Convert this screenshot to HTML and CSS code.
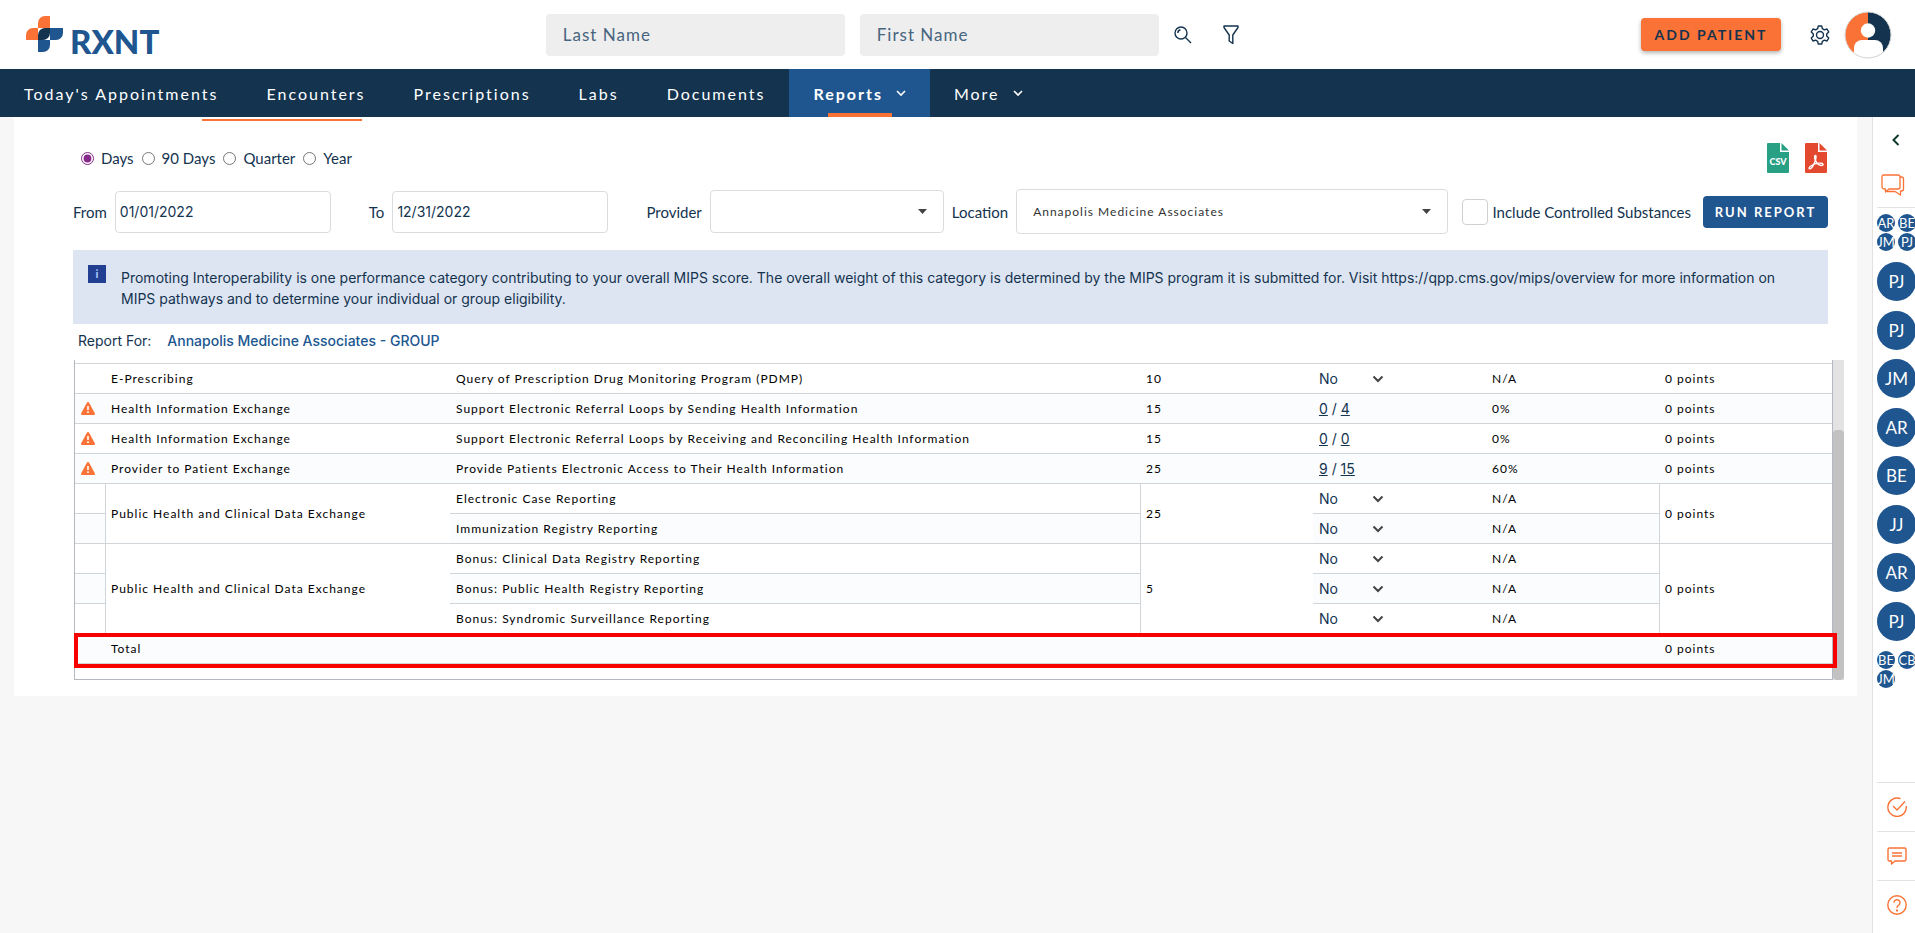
FILE: index.html
```html
<!DOCTYPE html>
<html lang="en">
<head>
    <meta charset="UTF-8">
    <meta name="viewport" content="width=device-width, initial-scale=1.0">
    <title>RXNT - Reports</title>
    <link rel="stylesheet" href="styles.css">
</head>
<body>

    <header class="header">
        <a class="logo" href="#" aria-label="RXNT">
            <svg width="37" height="37" viewBox="0 0 37 37">
                <path fill="#fa7236" d="M0 24v-5a7 7 0 0 1 7-7h5V7a7 7 0 0 1 7-7h5v12H12v12z"/>
                <path fill="#20568f" d="M24 12h13v5a7 7 0 0 1-7 7h-6v5a7 7 0 0 1-7 7h-5V24h12z"/>
                <path fill="#13334f" d="M12 24v-5a7 7 0 0 1 7-7h5v5a7 7 0 0 1-7 7z"/>
            </svg>
            <span>RXNT</span>
        </a>
        <form class="search">
            <input type="text" placeholder="Last Name" aria-label="Last Name">
            <input type="text" placeholder="First Name" aria-label="First Name">
            <button type="button" class="icon-btn" aria-label="Search">
                <svg width="18" height="18" viewBox="0 0 18 18" fill="none" stroke="#13334f" stroke-width="1.4">
                    <circle cx="7" cy="7" r="6"/><path d="M11.5 11.5L17 17M3.8 7a3.4 3.4 0 0 1 2.6-3.2"/>
                </svg>
            </button>
            <button type="button" class="icon-btn" aria-label="Filter">
                <svg width="16" height="20" viewBox="0 0 16 20" fill="none" stroke="#13334f" stroke-width="1.4" stroke-linejoin="round">
                    <path d="M1 1h14v1.5L9.8 10v8.5L6.2 16v-6L1 2.5z"/>
                </svg>
            </button>
        </form>
        <div class="account">
            <button type="button" class="add-patient">ADD PATIENT</button>
            <button type="button" class="icon-btn" aria-label="Settings">
                <svg width="20" height="20" viewBox="0 0 20 20" fill="none" stroke="#13334f" stroke-width="1.4" stroke-linejoin="round">
                    <path d="M8.300 1h3.400l.7 2.700 1.900 1.100 2.700-.8 1.700 2.900-2 2v2.200l2 2-1.700 2.900-2.700-.8-1.900 1.100-.7 2.700H8.300l-.7-2.700-1.900-1.100-2.700.8-1.700-2.900 2-2V8.900l-2-2L3 4l2.700.8 1.900-1.100z"/>
                    <circle cx="10" cy="10" r="3.5"/>
                </svg>
            </button>
            <svg class="avatar" width="48" height="48" viewBox="0 0 48 48">
                <defs><clipPath id="face"><circle cx="24" cy="24" r="23"/></clipPath></defs>
                <g clip-path="url(#face)">
                    <path fill="#fa7236" d="M0 0h24v48H0z"/>
                    <path fill="#13334f" d="M24 0h24v48H24z"/>
                    <circle cx="24" cy="19.5" r="7.2" fill="#fff"/>
                    <path fill="#fff" d="M10 48V37a8 8 0 0 1 8-8h13a8 8 0 0 1 8 8v11z"/>
                </g>
                <circle cx="24" cy="24" r="23" fill="none" stroke="#d8d8d8"/>
            </svg>
        </div>
    </header>

    <nav class="nav">
        <a href="#">Today's Appointments</a>
        <a href="#">Encounters</a>
        <a href="#">Prescriptions</a>
        <a href="#">Labs</a>
        <a href="#">Documents</a>
        <a href="#" class="active">Reports
            <svg width="10" height="7" viewBox="0 0 10 7" fill="none" stroke="#fff" stroke-width="1.6"><path d="M1 1l4 4 4-4"/></svg>
        </a>
        <a href="#">More
            <svg width="10" height="7" viewBox="0 0 10 7" fill="none" stroke="#fff" stroke-width="1.6"><path d="M1 1l4 4 4-4"/></svg>
        </a>
    </nav>

    <div class="layout">
        <main class="card">
            <div class="tab-line"></div>

            <div class="periods">
                <label><input type="radio" name="period" checked> Days</label>
                <label><input type="radio" name="period"> 90 Days</label>
                <label><input type="radio" name="period"> Quarter</label>
                <label><input type="radio" name="period"> Year</label>
                <div class="exports">
                    <button type="button" class="icon-btn" aria-label="Export CSV">
                        <svg width="24" height="32" viewBox="0 0 24 32">
                            <path fill="#28a084" d="M2 1h12v9h9v20a1 1 0 0 1-1 1H2a1 1 0 0 1-1-1V2a1 1 0 0 1 1-1z"/>
                            <path fill="#28a084" d="M15.5 1L23 8.5h-7.5z"/>
                            <text x="12" y="23" class="file-type">CSV</text>
                        </svg>
                    </button>
                    <button type="button" class="icon-btn" aria-label="Export PDF">
                        <svg width="24" height="32" viewBox="0 0 24 32">
                            <path fill="#e2492f" d="M2 1h12v9h9v20a1 1 0 0 1-1 1H2a1 1 0 0 1-1-1V2a1 1 0 0 1 1-1z"/>
                            <path fill="#e2492f" d="M15.5 1L23 8.5h-7.5z"/>
                            <path fill="none" stroke="#fff" stroke-width="1.4" d="M11.5 13.5c-1.500 0-1 3 .3 5.500 1.500 3 3.500 4.500 5.500 4.500 2.500 0 2.200-1.800.2-2.200-3-.5-7.500.7-10 2.200-2.500 1.600-3 3.300-1.800 3.300 1.500 0 4-3.800 5.300-7.300 1-2.800 1.500-6 .5-6z"/>
                        </svg>
                    </button>
                </div>
            </div>

            <form class="filters">
                <label for="from">From</label>
                <input type="text" id="from" class="date" value="01/01/2022">
                <label for="to" class="spaced">To</label>
                <input type="text" id="to" class="date" value="12/31/2022">
                <label for="provider" class="spaced">Provider</label>
                <select id="provider" class="provider"><option></option></select>
                <label for="location">Location</label>
                <select id="location" class="location"><option>Annapolis Medicine Associates</option></select>
                <label class="controlled"><input type="checkbox"> Include Controlled Substances</label>
                <button type="button" class="run">RUN REPORT</button>
            </form>

            <div class="info">
                <span class="info-icon">i</span>
                <p>Promoting Interoperability is one performance category contributing to your overall MIPS score. The overall weight of this category is determined by the MIPS program it is submitted for. Visit https://qpp.cms.gov/mips/overview for more information on MIPS pathways and to determine your individual or group eligibility.</p>
            </div>

            <div class="report-for">Report For: <strong>Annapolis Medicine Associates - GROUP</strong></div>

            <div class="results">
                <div class="table-box">
                    <table>
                        <colgroup>
                            <col class="c-icon"><col class="c-objective"><col><col class="c-num"><col class="c-num"><col class="c-num"><col class="c-num">
                        </colgroup>
                        <tbody>
                            <tr>
                                <td></td><td>E-Prescribing</td><td>Query of Prescription Drug Monitoring Program (PDMP)</td><td>10</td>
                                <td><select aria-label="PDMP"><option>No</option></select></td><td>N/A</td><td>0 points</td>
                            </tr>
                            <tr>
                                <td class="warn"><svg width="14" height="13" viewBox="0 0 14 13"><path fill="#fa7236" d="M7 0c.5 0 .8.300 1 .6l5.800 10.600c.4.900 0 1.800-1 1.800H1.200c-1 0-1.400-.9-1-1.800L6 .600C6.200.300 6.500 0 7 0z"/><path stroke="#fff" stroke-width="1.6" d="M7 4v4M7 9.300v1.600"/></svg></td>
                                <td>Health Information Exchange</td><td>Support Electronic Referral Loops by Sending Health Information</td><td>15</td>
                                <td class="ratio"><a href="#">0</a> / <a href="#">4</a></td><td>0%</td><td>0 points</td>
                            </tr>
                            <tr>
                                <td class="warn"><svg width="14" height="13" viewBox="0 0 14 13"><path fill="#fa7236" d="M7 0c.5 0 .8.300 1 .6l5.800 10.600c.4.900 0 1.800-1 1.800H1.200c-1 0-1.400-.9-1-1.800L6 .600C6.200.300 6.500 0 7 0z"/><path stroke="#fff" stroke-width="1.6" d="M7 4v4M7 9.300v1.600"/></svg></td>
                                <td>Health Information Exchange</td><td>Support Electronic Referral Loops by Receiving and Reconciling Health Information</td><td>15</td>
                                <td class="ratio"><a href="#">0</a> / <a href="#">0</a></td><td>0%</td><td>0 points</td>
                            </tr>
                            <tr>
                                <td class="warn"><svg width="14" height="13" viewBox="0 0 14 13"><path fill="#fa7236" d="M7 0c.5 0 .8.300 1 .6l5.800 10.600c.4.900 0 1.800-1 1.800H1.200c-1 0-1.400-.9-1-1.800L6 .600C6.200.300 6.500 0 7 0z"/><path stroke="#fff" stroke-width="1.6" d="M7 4v4M7 9.300v1.600"/></svg></td>
                                <td>Provider to Patient Exchange</td><td>Provide Patients Electronic Access to Their Health Information</td><td>25</td>
                                <td class="ratio"><a href="#">9</a> / <a href="#">15</a></td><td>60%</td><td>0 points</td>
                            </tr>
                            <tr>
                                <td></td><td rowspan="2">Public Health and Clinical Data Exchange</td><td>Electronic Case Reporting</td><td rowspan="2">25</td>
                                <td><select aria-label="Electronic Case Reporting"><option>No</option></select></td><td>N/A</td><td rowspan="2">0 points</td>
                            </tr>
                            <tr>
                                <td></td><td>Immunization Registry Reporting</td>
                                <td><select aria-label="Immunization Registry Reporting"><option>No</option></select></td><td>N/A</td>
                            </tr>
                            <tr>
                                <td></td><td rowspan="3">Public Health and Clinical Data Exchange</td><td>Bonus: Clinical Data Registry Reporting</td><td rowspan="3">5</td>
                                <td><select aria-label="Clinical Data Registry Reporting"><option>No</option></select></td><td>N/A</td><td rowspan="3">0 points</td>
                            </tr>
                            <tr>
                                <td></td><td>Bonus: Public Health Registry Reporting</td>
                                <td><select aria-label="Public Health Registry Reporting"><option>No</option></select></td><td>N/A</td>
                            </tr>
                            <tr>
                                <td></td><td>Bonus: Syndromic Surveillance Reporting</td>
                                <td><select aria-label="Syndromic Surveillance Reporting"><option>No</option></select></td><td>N/A</td>
                            </tr>
                            <tr>
                                <td></td><td>Total</td><td></td><td></td><td></td><td></td><td>0 points</td>
                            </tr>
                        </tbody>
                    </table>
                    <div class="highlight"></div>
                </div>
                <div class="track"><div class="thumb"></div></div>
            </div>
        </main>

        <aside class="sidebar">
            <button type="button" class="icon-btn collapse" aria-label="Expand">
                <svg width="8" height="12" viewBox="0 0 8 12" fill="none" stroke="#103c2c" stroke-width="2"><path d="M6.5 1L1.5 6l5 5"/></svg>
            </button>
            <button type="button" class="icon-btn chat" aria-label="Messages">
                <svg width="24" height="22" viewBox="0 0 24 22" fill="none" stroke="#fa7236" stroke-width="1.3" stroke-linejoin="round">
                    <path d="M3 1h14a2 2 0 0 1 2 2v10a2 2 0 0 1-2 2H8l-3.500 3V15H3a2 2 0 0 1-2-2V3a2 2 0 0 1 2-2z"/>
                    <path d="M19 3h1.500A2 2 0 0 1 22.500 5v10a2 2 0 0 1-2 2h-1v4L14 17.500H6"/>
                </svg>
            </button>
            <div class="minis">
                <span>AR</span><span>BE</span><span>JM</span><span>PJ</span>
            </div>
            <div class="people">
                <span>PJ</span><span>PJ</span><span>JM</span><span>AR</span><span>BE</span><span>JJ</span><span>AR</span><span>PJ</span>
            </div>
            <div class="minis">
                <span>BE</span><span>CB</span><span>JM</span>
            </div>
            <div class="tools">
                <button type="button" class="icon-btn" aria-label="Tasks">
                    <svg width="20" height="20" viewBox="0 0 20 20" fill="none" stroke="#fa7236" stroke-width="1.4"><path d="M13.5 1.7A9.200 9.200 0 1 0 19.200 9M6 9l4 4 8-8.500"/></svg>
                </button>
                <button type="button" class="icon-btn" aria-label="Comments">
                    <svg width="20" height="18" viewBox="0 0 20 18" fill="none" stroke="#fa7236" stroke-width="1.4" stroke-linejoin="round"><path d="M2.500 1h15A1.500 1.500 0 0 1 19 2.500v10a1.500 1.500 0 0 1-1.500 1.500H8l-3.500 3V14h-2A1.500 1.500 0 0 1 1 12.500v-10A1.500 1.500 0 0 1 2.500 1zM5 6h10M5 9h10"/></svg>
                </button>
                <button type="button" class="icon-btn" aria-label="Help">
                    <svg width="20" height="20" viewBox="0 0 20 20" fill="none" stroke="#fa7236" stroke-width="1.4"><circle cx="10" cy="10" r="9.2"/><path d="M7 7.800a3 3 0 1 1 4.500 2.600c-1 .6-1.500 1-1.500 2.600"/><path stroke-width="2" d="M10 14.500v2"/></svg>
                </button>
            </div>
        </aside>
    </div>

</body>
</html>
```
FILE: styles.css
```css
* {
    box-sizing: border-box;
}

body {
    margin: 0;
    height: 100vh;
    display: flex;
    flex-direction: column;
    overflow: hidden;
    background-color: #f7f7f7;
    color: #13334f;
    font-family: Lato, sans-serif;
    font-size: 15px;
}

input, select, button {
    font-family: inherit;
    color: inherit;
    margin: 0;
}

.icon-btn {
    display: flex;
    align-items: center;
    justify-content: center;
    padding: 0;
    border: none;
    background: none;
    cursor: pointer;
}

/* header */

.header {
    display: grid;
    grid-template-columns: 28.5% auto 1fr;
    align-items: center;
    height: 69px;
    background-color: white;
}

.logo {
    display: flex;
    align-items: center;
    gap: 7px;
    padding-left: 26px;
    color: #20568f;
    font-size: 33px;
    font-weight: 900;
    line-height: 36px;
    text-decoration: none;
}

.logo span {
    padding-top: 12px;
}

.search {
    display: flex;
    align-items: center;
    gap: 15px;
}

.search input {
    width: 299px;
    height: 42px;
    padding: 0 17px;
    border: none;
    border-radius: 4px;
    background-color: #eee;
    font-size: 17px;
    letter-spacing: 1px;
}

.search input::placeholder {
    color: #47657f;
}

.search .icon-btn + .icon-btn {
    margin-left: 16px;
}

.account {
    display: flex;
    align-items: center;
    justify-content: flex-end;
    padding-right: 23px;
}

.account .icon-btn {
    margin: 0 14px 0 29px;
}

.add-patient {
    width: 140px;
    height: 33px;
    padding: 0;
    border: none;
    border-radius: 4px;
    background-color: #fa7236;
    box-shadow: 0 2px 4px rgba(0, 0, 0, 0.3);
    font-size: 14px;
    font-weight: 700;
    letter-spacing: 2px;
    cursor: pointer;
}

/* navigation */

.nav {
    display: flex;
    flex-shrink: 0;
    height: 48px;
    background-color: #13334f;
}

.nav a {
    display: flex;
    align-items: center;
    gap: 13px;
    padding: 0 24px;
    color: white;
    font-size: 16px;
    letter-spacing: 2px;
    text-decoration: none;
}

.nav .active {
    position: relative;
    background-color: #20568f;
    font-weight: 700;
}

.nav .active::after {
    content: "";
    position: absolute;
    left: 50%;
    bottom: 0;
    width: 64px;
    height: 4px;
    margin-left: -32px;
    background-color: #fa7236;
}

/* page */

.layout {
    display: flex;
    flex: 1;
    min-height: 0;
}

.card {
    flex: 1;
    align-self: flex-start;
    min-width: 0;
    margin: 0 15px 0 14px;
    padding: 2px 29px 16px 59px;
    background-color: white;
}

.tab-line {
    width: 160px;
    height: 2px;
    margin-left: 129px;
    background-color: #fa7236;
}

.periods {
    display: flex;
    align-items: center;
    gap: 8px;
    height: 32px;
    margin: 21px 0 15px 8px;
}

.periods label {
    display: flex;
    align-items: center;
    gap: 7px;
}

.periods input {
    width: 13px;
    height: 13px;
    accent-color: #86298a;
}

.exports {
    display: flex;
    gap: 14px;
    margin-left: auto;
}

.file-type {
    fill: white;
    font-size: 9px;
    font-weight: 900;
    text-anchor: middle;
}

.filters {
    display: flex;
    align-items: center;
    gap: 8px;
    height: 45px;
}

.filters .spaced {
    margin-left: 30px;
}

.date {
    width: 216px;
    height: 42px;
    padding: 0 4px;
    border: 1px solid #dcdcdc;
    border-radius: 4px;
    font-family: Inter, sans-serif;
    font-size: 14px;
}

.provider, .location {
    width: 234px;
    height: 43px;
    padding: 0 16px;
    border: 1px solid #dcdcdc;
    border-radius: 4px;
    background: white url("data:image/svg+xml,%3Csvg xmlns='http://www.w3.org/2000/svg' width='9' height='5'%3E%3Cpath fill='%23444' d='M0 0h9L4.500 5z'/%3E%3C/svg%3E") no-repeat right 16px center;
    appearance: none;
}

.location {
    flex: 1;
    height: 45px;
    color: #333;
    font-size: 12px;
    letter-spacing: 1px;
}

.controlled {
    display: flex;
    align-items: center;
    gap: 5px;
    margin: 0 4px 0 6px;
}

.controlled input {
    width: 26px;
    height: 26px;
    border: 1px solid #d0d0d0;
    border-radius: 4px;
    appearance: none;
}

.run {
    width: 125px;
    height: 32px;
    padding: 0;
    border: none;
    border-radius: 4px;
    background-color: #20568f;
    color: white;
    font-size: 13px;
    font-weight: 700;
    letter-spacing: 2px;
    cursor: pointer;
}

.info {
    display: flex;
    gap: 15px;
    min-height: 74px;
    margin-top: 16px;
    padding: 15px;
    background-color: #dee5f2;
    font-family: Inter, sans-serif;
    font-size: 14px;
    line-height: 21px;
}

.info p {
    margin: 2px 0 0;
}

.info-icon {
    flex-shrink: 0;
    width: 18px;
    height: 18px;
    background-color: #233f91;
    color: #9cc3ff;
    font-size: 11px;
    font-weight: 700;
    line-height: 18px;
    text-align: center;
}

.report-for {
    padding: 6px 5px 9px;
    font-family: Inter, sans-serif;
    font-size: 14px;
    line-height: 21px;
}

.report-for strong {
    margin-left: 12px;
    color: #20568f;
    font-weight: 500;
}

/* results table */

.results {
    display: flex;
    margin: 0 -16px 0 1px;
}

.table-box {
    position: relative;
    flex: 1;
    padding: 3px 0 15px;
    border: 1px solid #b4b9bf;
    border-top: none;
}

table {
    width: 100%;
    border-collapse: separate;
    border-spacing: 0;
    border-top: 1px solid #d0d5da;
    table-layout: fixed;
    color: black;
    font-size: 12px;
    letter-spacing: 1px;
}

.c-icon {
    width: 30px;
}

.c-objective {
    width: 345px;
}

.c-num {
    width: 173px;
}

td {
    height: 30px;
    padding: 0 6px;
    border-bottom: 1px solid #d0d5da;
    line-height: 16px;
    white-space: nowrap;
}

tr:nth-child(even) {
    background-color: #fbfcfe;
}

td[rowspan] {
    border-left: 1px solid #d0d5da;
    padding-left: 5px;
    background-color: white;
}

.warn svg {
    display: block;
}

.ratio, td select {
    color: #13334f;
    font-family: Inter, sans-serif;
    font-size: 14px;
    letter-spacing: normal;
}

.ratio a {
    color: inherit;
}

td select {
    display: block;
    width: 68px;
    height: 24px;
    padding: 0;
    border: none;
    background: url("data:image/svg+xml,%3Csvg xmlns='http://www.w3.org/2000/svg' width='12' height='8'%3E%3Cpath fill='none' stroke='%23444' stroke-width='2' d='M1.500 1.500L6 6l4.500-4.500'/%3E%3C/svg%3E") no-repeat right 3px center;
    appearance: none;
}

.highlight {
    position: absolute;
    left: -1px;
    right: -5px;
    bottom: 11px;
    height: 35px;
    border: 4px solid #f60000;
}

.track {
    display: flex;
    width: 11px;
    padding-top: 70px;
    background-color: #e3e3e3;
}

.thumb {
    flex: 1;
    border-radius: 4px;
    background-color: #c2c2c2;
}

/* right sidebar */

.sidebar {
    display: flex;
    flex-direction: column;
    flex-shrink: 0;
    width: 43px;
    padding-left: 4px;
    overflow: hidden;
    border-left: 1px solid #e2e2e2;
    background-color: white;
}

.collapse {
    height: 46px;
}

.chat {
    height: 45px;
    padding-right: 6px;
    border-bottom: 1px solid #e2e2e2;
}

.minis {
    display: grid;
    grid-template-columns: 18px 18px;
    gap: 1px 3px;
    margin-top: 6px;
}

.minis span, .people span {
    display: flex;
    align-items: center;
    justify-content: center;
    height: 18px;
    border-radius: 50%;
    background-color: #20568f;
    color: white;
    font-size: 13px;
}

.people {
    display: flex;
    flex-direction: column;
    justify-content: space-between;
    height: 379px;
    margin: 11px 0 4px;
}

.people span {
    width: 39px;
    height: 39px;
    font-size: 17px;
}

.tools {
    margin-top: auto;
    padding-bottom: 4px;
}

.tools .icon-btn {
    width: 40px;
    height: 49px;
    border-top: 1px solid #e2e2e2;
}
```
